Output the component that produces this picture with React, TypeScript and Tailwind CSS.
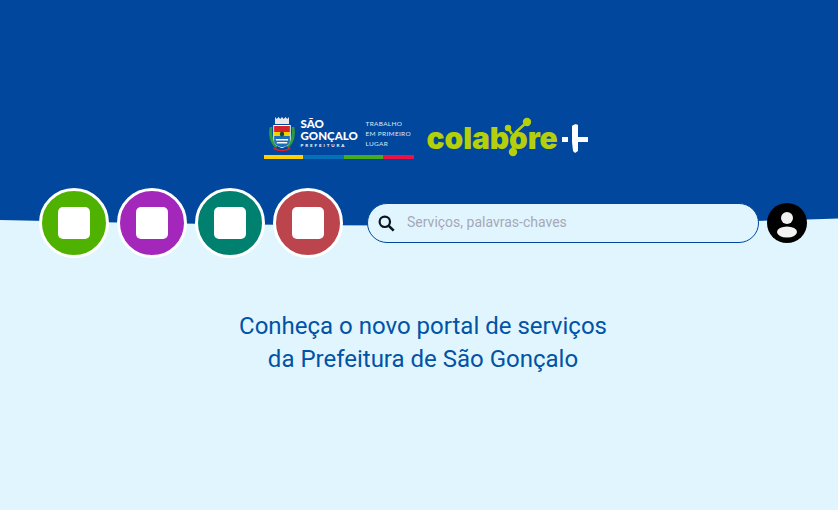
function PrefeituraLogo() {
  return (
    <div className="flex w-[150px] flex-col">
      <div className="flex h-[37px] items-center">
        <svg width="28" height="37" viewBox="0 0 32 37" preserveAspectRatio="none" className="ml-[4px] shrink-0">
          <path d="M8 2l2 2 2-2 2 2 2-2 2 2 2-2 2 2 2-2v7H8z" fill="#e8e8e8" />
          <path d="M2 12c-2 8 0 16 7 21l2-2C6 27 4 20 5 12z" fill="#2e9b3f" />
          <path d="M30 12c2 8 0 16-7 21l-2-2c5-4 7-11 6-19z" fill="#2e9b3f" />
          <path d="M6 10h20v13c0 6-5 9-10 10-5-1-10-4-10-10z" fill="#fff" />
          <path d="M7 11h18v6H7z" fill="#d8232a" />
          <path d="M7 17h18v4H7z" fill="#f4d000" />
          <path d="M7 21h18v6c-2 4-6 5-9 5-3 0-7-1-9-5z" fill="#1b6fb8" />
          <circle cx="16" cy="19" r="2.5" fill="#1d4b2a" />
          <path d="M9 24h14v1.5H9zM10 27h12v1.5H10z" fill="#fff" />
          <path d="M7 32c5 4 13 4 18 0l1 2c-6 3-14 3-20 0z" fill="#d8232a" />
        </svg>
        <div className="ml-[5px] flex w-[57px] flex-col font-['Lato',sans-serif] text-[11.5px] leading-[12px] font-black text-white">
          <span>SÃO</span>
          <span className="whitespace-nowrap">GONÇALO</span>
          <span className="mt-[1px] text-[4.5px] leading-[6px] font-bold tracking-[1.9px]">PREFEITURA</span>
        </div>
        <div className="ml-[8px] flex flex-col font-['Lato',sans-serif] text-[6.5px] leading-[10px] tracking-[0.3px] whitespace-nowrap text-[#dbe9f7]">
          <span>TRABALHO</span>
          <span>EM PRIMEIRO</span>
          <span>LUGAR</span>
        </div>
      </div>
      <div className="mt-[3px] flex h-[4px]">
        <div className="w-[39px] bg-[#fdd106]" />
        <div className="w-[41px] bg-[#0670b8]" />
        <div className="w-[39px] bg-[#46ab1d]" />
        <div className="w-[31px] bg-[#ee1144]" />
      </div>
    </div>
  );
}

function ColaboreLogo() {
  return (
    <div className="relative ml-[13px] flex h-[44px] w-[161px] items-center pt-[1px]">
      <span className="font-['Inter',sans-serif] text-[30px] leading-none font-black tracking-[-0.1px] text-[#b5cf0a]">
        colabore
      </span>
      <svg width="161" height="44" viewBox="0 0 161 44" className="absolute top-0 left-0">
        <g stroke="#b5cf0a" strokeWidth="2.5" fill="none">
          <path d="M88 18L100 7M81 13l4 6M86 30v7" />
        </g>
        <circle cx="100" cy="7" r="4.2" fill="#b5cf0a" />
        <circle cx="81" cy="13" r="3.2" fill="#b5cf0a" />
        <circle cx="86" cy="37" r="4.2" fill="#b5cf0a" />
        <rect x="135" y="22" width="6" height="5" fill="#fff" />
        <path d="M145 22V11c2-2 5-2 6-1v12h10v5h-10v9l-3 2-2-2-1-9z" fill="#fff" />
      </svg>
    </div>
  );
}

function ShortcutButton({ color }: { color: string }) {
  return (
    <button className={`flex h-[70px] w-[70px] items-center justify-center rounded-full border-[3px] border-white ${color}`}>
      <span className="h-[32px] w-[32px] rounded-[5px] bg-white" />
    </button>
  );
}

export default function App() {
  return (
    <div className="relative h-[510px] w-full overflow-hidden bg-[#e1f5fe] font-['Roboto',sans-serif]">
      <svg
        className="absolute top-0 left-0"
        width="838"
        height="226"
        viewBox="0 0 838 226"
        preserveAspectRatio="none"
      >
        <path d="M0 0H838V218.5Q600 226 400 225.5T0 220Z" fill="#01479d" />
      </svg>

      <div className="relative">
        <div className="flex h-[188px] items-end justify-center pb-[29px] pl-[13px]">
          <PrefeituraLogo />
          <ColaboreLogo />
        </div>

        <div className="flex h-[70px] items-center pl-[39px]">
          <div className="flex gap-[8px]">
            <ShortcutButton color="bg-[#4fb200]" />
            <ShortcutButton color="bg-[#a427bb]" />
            <ShortcutButton color="bg-[#00806e]" />
            <ShortcutButton color="bg-[#bb444d]" />
          </div>
          <div className="ml-[24px] flex h-[40px] w-[392px] items-center rounded-[20px] border border-[#01479d] bg-[#e1f5fe] pl-[10px]">
            <svg width="17" height="17" viewBox="0 0 17 17" fill="none" stroke="#0b1424">
              <circle cx="6.8" cy="6.8" r="5.2" strokeWidth="2.2" />
              <path d="M10.8 10.8L15.7 15.7" strokeWidth="2.6" />
            </svg>
            <span className="mb-[1px] ml-[12px] text-[14px] text-[#a6a8b6]">Serviços, palavras-chaves</span>
          </div>
          <div className="ml-[8px] flex h-[40px] w-[40px] items-center justify-center rounded-full bg-black">
            <svg width="40" height="40" viewBox="0 0 40 40" fill="#f2f2f2">
              <circle cx="20" cy="15" r="6" />
              <ellipse cx="20" cy="29" rx="10" ry="5.5" />
            </svg>
          </div>
        </div>

        <h1 className="mt-[52px] pl-[8px] text-center text-[24px] leading-[33px] font-normal text-[#0053a6]">
          Conheça o novo portal de serviços
          <br />
          da Prefeitura de São Gonçalo
        </h1>
      </div>
    </div>
  );
}
